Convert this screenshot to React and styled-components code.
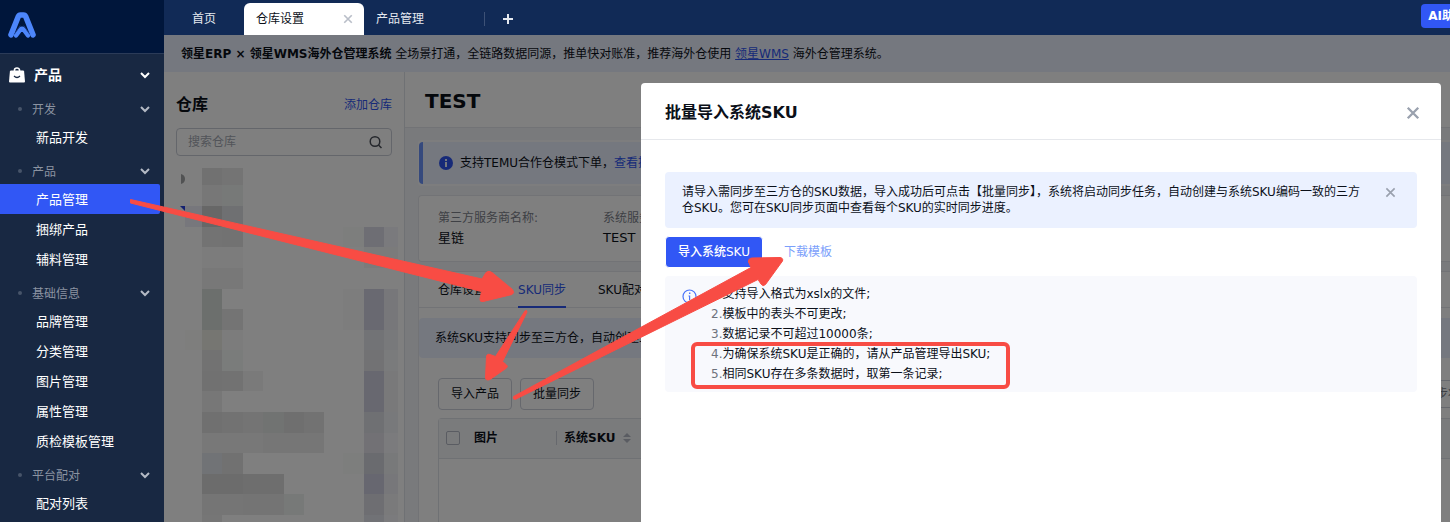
import styled, { createGlobalStyle } from "styled-components";

const GlobalStyle = createGlobalStyle`
    * {
        box-sizing: border-box;
    }
    body {
        margin: 0;
        font-family: "DejaVu Sans", "Noto Sans CJK SC", sans-serif;
        font-size: 12px;
        line-height: 20px;
        color: #0b1019;
    }
    button, input {
        font-family: inherit;
        font-size: 12px;
        line-height: 20px;
        color: inherit;
    }
    h1, h2, p, ul {
        margin: 0;
        padding: 0;
    }
    a {
        text-decoration: none;
    }
`

const Layout = styled.div`
    display: flex;
    position: relative;
    height: 100vh;
    overflow: hidden;
`

/* sidebar */
const Sidebar = styled.nav`
    flex: 0 0 164px;
    background: #182842;
    color: #fff;
`
const LogoBar = styled.div`
    height: 54px;
    padding: 12px 8px;
    background: #00163b;
    border-bottom: 1px solid #2b3b58;
`
const MenuTitle = styled.div`
    display: flex;
    align-items: center;
    height: 36px;
    padding: 6px 12px 0 9px;
    font-size: 14px;
    font-weight: 700;
`
const MenuTitleText = styled.span`
    flex: 1;
    padding-left: 9px;
`
const GroupTitle = styled.div`
    display: flex;
    align-items: center;
    height: 32px;
    padding: 6px 12px 0 18px;
    color: #8b93a1;
`
const Dot = styled.span`
    width: 4px;
    height: 4px;
    border-radius: 50%;
    background: #475469;
`
const GroupText = styled.span`
    flex: 1;
    padding: 2px 0 0 10px;
`
const MenuList = styled.ul`
    list-style: none;
`
const MenuItem = styled.a`
    display: block;
    height: 30px;
    margin-right: 4px;
    padding-left: 36px;
    border-radius: 0 2px 2px 0;
    font-size: 13px;
    line-height: 31px;
    color: #fff;
    background: ${(props) => (props.$active ? "#3157f5" : "transparent")};
`

/* top tabs */
const Main = styled.div`
    flex: 1;
    min-width: 0;
    display: flex;
    flex-direction: column;
`
const TopBar = styled.header`
    display: flex;
    align-items: flex-end;
    height: 35px;
    flex-shrink: 0;
    padding-left: 16px;
    background: #112a56;
    overflow: hidden;
`
const Tab = styled.div`
    display: flex;
    align-items: center;
    justify-content: space-between;
    width: ${(props) => props.$width};
    height: 32px;
    padding: 0 10px 0 12px;
    border-radius: 6px 6px 0 0;
    color: ${(props) => (props.$active ? "#0b1019" : "#e4e8ef")};
    background: ${(props) => (props.$active ? "#fff" : "transparent")};
`
const IconButton = styled.button`
    display: flex;
    align-items: center;
    justify-content: center;
    flex-shrink: 0;
    width: ${(props) => props.$size || "12px"};
    height: ${(props) => props.$size || "12px"};
    padding: 0;
    border: 0;
    background: none;
    color: ${(props) => props.$color || "#9aa1ae"};
`
const AddTab = styled.div`
    display: flex;
    align-items: center;
    height: 14px;
    margin-bottom: 9px;
    padding-left: 17px;
    border-left: 1px solid #3d5176;
`
const AiButton = styled.button`
    flex-shrink: 0;
    height: 24px;
    margin: 0 -23px 7px auto;
    padding: 0 7px;
    border: 0;
    border-radius: 4px;
    font-weight: 700;
    color: #fff;
    background: #3157f5;
`

/* page */
const Page = styled.div`
    position: relative;
    flex: 1;
    min-height: 0;
    display: flex;
    flex-direction: column;
    overflow: hidden;
`
const Notice = styled.div`
    height: 37px;
    flex-shrink: 0;
    padding-left: 17px;
    line-height: 39px;
    background: #ebf1ff;
`
const NoticeLink = styled.a`
    color: #2f55f0;
    text-decoration: underline;
`
const Columns = styled.div`
    flex: 1;
    display: flex;
    min-height: 0;
`
const Warehouses = styled.aside`
    flex: 0 0 241px;
    padding: 22px 12px 0;
    background: #fff;
    border-right: 1px solid #dfe2e8;
    overflow: hidden;
`
const WarehouseHead = styled.div`
    display: flex;
    align-items: center;
    justify-content: space-between;
    height: 22px;
`
const WarehouseTitle = styled.h2`
    font-size: 16px;
    font-weight: 700;
`
const TextLink = styled.a`
    color: ${(props) => props.$color || "#2f55f0"};
`
const SearchBox = styled.label`
    display: flex;
    align-items: center;
    height: 28px;
    margin: 12px 0;
    padding: 0 8px 0 11px;
    border: 1px solid #c9cdd6;
    border-radius: 4px;
`
const SearchInput = styled.input`
    flex: 1;
    min-width: 0;
    padding: 0;
    border: 0;
    outline: 0;
    background: none;
    &::placeholder {
        color: #a4a9b3;
        opacity: 1;
    }
`
const Mosaic = styled.svg`
    display: block;
    overflow: visible;
`
const Detail = styled.main`
    flex: 1;
    min-width: 0;
    display: flex;
    flex-direction: column;
    background: #f3f5f9;
`
const DetailTitle = styled.h1`
    height: 56px;
    padding-left: 20px;
    font-size: 20px;
    line-height: 58px;
    background: #fff;
    border-bottom: 1px solid #e4e7ec;
`
const DetailBody = styled.div`
    flex: 1;
    display: flex;
    flex-direction: column;
    gap: 9px;
    padding: 12px 0 0 13px;
`
const AlertFrame = styled.div`
    padding: 2px 0 2px 1px;
    border-radius: 4px 0 0 4px;
    background: #fafbfd;
`
const Alert = styled.div`
    display: flex;
    align-items: center;
    gap: 7px;
    height: 42px;
    padding-left: 16px;
    border-left: 4px solid #6b93fb;
    border-radius: 4px 0 0 4px;
    background: #ebf1ff;
`
const Card = styled.section`
    flex: ${(props) => (props.$grow ? 1 : "none")};
    border: 1px solid #e4e7ec;
    border-right: 0;
    border-radius: 4px 0 0 4px;
    background: #fff;
`
const Facts = styled.div`
    display: grid;
    grid-template-columns: 165px 1fr;
    height: 65px;
    padding: 12px 19px;
`
const FactLabel = styled.p`
    color: #7c818b;
`
const FactValue = styled.p`
    font-size: 13px;
`
const DetailTabs = styled.div`
    display: flex;
    gap: 32px;
    height: 36px;
    padding-left: 19px;
    line-height: 36px;
    border-bottom: 1px solid #e4e7ec;
`
const DetailTab = styled.a`
    height: 36px;
    color: ${(props) => (props.$active ? "#2f55f0" : "#0b1019")};
    border-bottom: 2px solid ${(props) => (props.$active ? "#2f55f0" : "transparent")};
`
const SyncHint = styled.p`
    height: 40px;
    margin-top: 10px;
    padding-left: 16px;
    line-height: 40px;
    background: #ebf1ff;
    border-radius: 4px 0 0 4px;
`
const Toolbar = styled.div`
    display: flex;
    align-items: center;
    gap: 8px;
    margin: 20px 0 8px;
    padding-left: 19px;
`
const ToolButton = styled.button`
    height: 32px;
    padding: 0 12px;
    border: 1px solid #ccd0da;
    border-radius: 4px;
    background: none;
`
const StatusButton = styled(ToolButton)`
    height: 28px;
    width: 100px;
    margin: 0 -61px 0 auto;
    text-align: left;
    color: #7c818b;
    flex-shrink: 0;
`
const TableFrame = styled.div`
    height: 200px;
    margin-left: 19px;
    border: 1px solid #dfe2e8;
    border-right: 0;
    border-radius: 4px 0 0 0;
`
const Table = styled.table`
    width: 100%;
    table-layout: fixed;
    border-collapse: collapse;
`
const Th = styled.th`
    width: ${(props) => props.$width || "auto"};
    height: 39px;
    padding: 0 0 0 7px;
    text-align: left;
    background: #f5f6f9;
    border-bottom: 1px solid #dfe2e8;
`
const ThInner = styled.div`
    display: flex;
    align-items: center;
    gap: 8px;
    height: 14px;
    padding-left: 7px;
    border-left: 1px solid #ccd0da;
`
const Checkbox = styled.input`
    appearance: none;
    display: block;
    width: 14px;
    height: 14px;
    margin: 0;
    border: 1px solid #b4b9c4;
    border-radius: 2px;
`

/* import dialog */
const Mask = styled.div`
    position: absolute;
    inset: 0;
    display: flex;
    justify-content: flex-end;
    padding: 48px 9px 0 20px;
    background: rgba(0, 0, 0, 0.5);
`
const Dialog = styled.section`
    width: 800px;
    border-radius: 4px 4px 0 0;
    background: #fff;
`
const DialogHead = styled.div`
    display: flex;
    align-items: center;
    justify-content: space-between;
    height: 57px;
    padding: 3px 20px 0 24px;
    border-bottom: 1px solid #e6e8ec;
`
const DialogTitle = styled.h2`
    font-size: 16px;
    font-weight: 700;
`
const DialogBody = styled.div`
    display: flex;
    flex-direction: column;
    gap: 8px;
    padding: 32px 24px;
`
const Tip = styled.div`
    display: flex;
    gap: 16px;
    padding: 12px 21px 12px 17px;
    line-height: 16px;
    border-radius: 4px;
    background: #ebf1ff;
`
const TipText = styled.p`
    flex: 1;
`
const TipClose = styled(IconButton)`
    height: 16px;
`
const Actions = styled.div`
    display: flex;
    align-items: center;
    gap: 21px;
`
const PrimaryButton = styled.button`
    height: 32px;
    padding: 0 12px;
    border: 1px solid #fff;
    border-radius: 4px;
    font-weight: 500;
    color: #fff;
    background: #3157f5;
`
const Notes = styled.div`
    display: flex;
    align-items: flex-start;
    gap: 14px;
    padding: 8px 17px;
    border-radius: 4px;
    background: #f8f9fd;
`
const NoteIcon = styled.span`
    display: flex;
    align-items: center;
    height: 24px;
`
const NoteList = styled.ul`
    list-style: none;
`
const NoteNumber = styled.span`
    color: #6d727c;
`

/* marks drawn over the page */
const Marks = styled.svg`
    position: absolute;
    top: 0;
    left: 0;
    pointer-events: none;
`

const Chevron = ({ color }) => (
    <svg width="14" height="14" viewBox="0 0 14 14" fill="none" stroke={color} strokeWidth="2">
        <path d="M3 5l4 4 4-4" />
    </svg>
)

const Cross = ({ size = 12, width = 2 }) => (
    <svg width={size} height={size} viewBox="0 0 12 12" fill="none" stroke="currentColor" strokeWidth={width}>
        <path d="M1.5 1.5l9 9M10.5 1.5l-9 9" />
    </svg>
)

const Logo = () => (
    <svg width="28" height="26" viewBox="0 0 28 26" fill="none" strokeLinecap="round" strokeLinejoin="round">
        <path d="M3 22.8L10.4 4.3q.6-1.3 2-1.3h3.2q1.4 0 2 1.3L25 22.8" stroke="#4c86fb" strokeWidth="5.6" />
        <path d="M8 23.5l4.5-6q1.5-1.6 3 0l4.5 6" stroke="#4c86fb" strokeWidth="4.4" />
        <path d="M6.5 22l5.5-8M21.5 22l-5.5-8" stroke="#1d429c" strokeWidth="0.8" />
    </svg>
)

const Bag = () => (
    <svg width="16" height="16" viewBox="0 0 16 16">
        <path d="M5.5 5V3a2.5 2 0 0 1 5 0v2" fill="none" stroke="#fff" strokeWidth="1.6" />
        <path d="M2 3.5h12q1 0 1.1 1L16 14.5q0 1-1 1H1q-1 0-1-1L.9 4.5q.1-1 1.100-1z" fill="#fff" />
        <path d="M5 9q3 3 6 0" fill="none" stroke="#182842" strokeWidth="1.2" />
    </svg>
)

const InfoFilled = () => (
    <svg width="14" height="14" viewBox="0 0 14 14">
        <circle cx="7" cy="7" r="7" fill="#2f55f0" />
        <path d="M6 3h2v2H6zM6 6h2v5H6z" fill="#ebf1ff" />
    </svg>
)

const InfoOutline = () => (
    <svg width="15" height="15" viewBox="0 0 15 15">
        <circle cx="7.5" cy="7.5" r="6.5" fill="none" stroke="#4a74f8" strokeWidth="1.2" />
        <path d="M7 3.5h1.4v1.5H7zM6.5 6.5h1.7V11H7V7.5h-.5z" fill="#4a74f8" />
    </svg>
)

const groups = [
    { title: "开发", items: ["新品开发"] },
    { title: "产品", items: ["产品管理", "捆绑产品", "辅料管理"] },
    { title: "基础信息", items: ["品牌管理", "分类管理", "图片管理", "属性管理", "质检模板管理"] },
    { title: "平台配对", items: ["配对列表"] },
]

const notes = [
    "支持导入格式为xslx的文件;",
    "模板中的表头不可更改;",
    "数据记录不可超过10000条;",
    "为确保系统SKU是正确的，请从产品管理导出SKU;",
    "相同SKU存在多条数据时，取第一条记录;",
]

// x, y, width, height, fill
const blocks = [
    [26, 0, 20, 17, "#e2e2e2"], [46, 0, 21, 17, "#e8e8e8"],
    [26, 17, 20, 21, "#efefef"], [46, 17, 21, 21, "#eef2f0"],
    [9, 38, 17, 21, "#eeeef8"], [26, 38, 20, 21, "#cecece"], [46, 38, 21, 21, "#dfe1e5"],
    [26, 59, 20, 20, "#e6e6e6"], [46, 59, 21, 20, "#e4e4e4"],
    [26, 79, 41, 21, "#f8f8f8"], [26, 100, 41, 21, "#f1f1f1"],
    [26, 121, 20, 41, "#d9dedb"], [46, 141, 21, 21, "#e9e9e9"],
    [9, 162, 17, 20, "#fdfdfa"], [26, 162, 20, 20, "#edece5"], [46, 162, 21, 20, "#f9f9f9"],
    [26, 182, 20, 21, "#e4e4e4"], [46, 182, 21, 21, "#f4f8f6"],
    [26, 203, 20, 20, "#e2e2e2"], [46, 203, 21, 20, "#e5e5e5"], [67, 203, 20, 20, "#f5f5f5"],
    [26, 223, 20, 21, "#eeeeee"],
    [26, 244, 20, 21, "#e0e0e0"], [46, 244, 21, 21, "#e4e4e4"], [67, 244, 20, 21, "#e9e9e9"],
    [87, 244, 21, 21, "#e3e7e4"], [108, 244, 20, 21, "#dedede"], [128, 244, 20, 21, "#e5e5e5"],
    [26, 265, 61, 20, "#f0f0f0"], [87, 265, 61, 20, "#ececec"],
    [26, 285, 20, 21, "#e3e6ed"], [46, 285, 21, 21, "#e3e3e3"],
    [26, 306, 41, 20, "#d8d8d8"], [67, 306, 41, 20, "#dddddd"],
    [26, 326, 41, 21, "#ebebeb"], [67, 326, 41, 21, "#e8e8e8"], [108, 326, 20, 21, "#eff3f1"],
    [26, 347, 20, 20, "#ececec"],
    [167, 59, 21, 20, "#fafcfb"], [188, 59, 20, 20, "#dddde8"], [208, 59, 14, 20, "#f4f4fa"],
    [188, 79, 34, 21, "#f6f6f6"],
    [167, 121, 21, 41, "#fbfbfb"], [188, 121, 20, 41, "#d3d3e2"], [208, 121, 14, 41, "#eeeff5"],
    [188, 162, 20, 20, "#e4e6ed"], [208, 162, 14, 20, "#f1f3f7"],
    [188, 182, 20, 21, "#e4e4e8"], [208, 182, 14, 21, "#f4f6f8"],
    [188, 203, 20, 41, "#d0d0e1"], [208, 203, 14, 41, "#f2f2f5"],
    [188, 244, 20, 21, "#dfe0e7"], [208, 244, 14, 21, "#f1f3f6"],
    [188, 265, 20, 20, "#e5e2ea"], [208, 265, 14, 20, "#f6f6fa"],
    [167, 285, 21, 21, "#fafcfb"], [188, 285, 20, 21, "#d5d6de"], [208, 285, 14, 21, "#f1f3f5"],
    [188, 306, 20, 20, "#cecee0"], [208, 306, 14, 20, "#efeff5"],
    [188, 326, 20, 21, "#dcdde5"], [208, 326, 14, 21, "#f4f5f7"],
    [188, 347, 20, 20, "#e3e4ec"], [208, 347, 14, 20, "#f6f6fa"],
]

const App = () => {
    return (
        <Layout>
            <GlobalStyle />
            <Sidebar>
                <LogoBar>
                    <Logo />
                </LogoBar>
                <MenuTitle>
                    <Bag />
                    <MenuTitleText>产品</MenuTitleText>
                    <Chevron color="#fff" />
                </MenuTitle>
                {groups.map((group) => (
                    <div key={group.title}>
                        <GroupTitle>
                            <Dot />
                            <GroupText>{group.title}</GroupText>
                            <Chevron color="#b4bac5" />
                        </GroupTitle>
                        <MenuList>
                            {group.items.map((item) => (
                                <li key={item}>
                                    <MenuItem href="#" $active={item === "产品管理"}>{item}</MenuItem>
                                </li>
                            ))}
                        </MenuList>
                    </div>
                ))}
            </Sidebar>
            <Main>
                <TopBar>
                    <Tab $width="64px">首页</Tab>
                    <Tab $width="120px" $active>
                        仓库设置
                        <IconButton aria-label="关闭标签" $color="#b9bec8">
                            <Cross size={10} />
                        </IconButton>
                    </Tab>
                    <Tab $width="120px">产品管理</Tab>
                    <AddTab>
                        <IconButton aria-label="新建标签" $color="#e4e8ef">
                            <svg width="10" height="10" viewBox="0 0 10 10" stroke="currentColor" strokeWidth="2">
                                <path d="M5 0v10M0 5h10" />
                            </svg>
                        </IconButton>
                    </AddTab>
                    <AiButton>AI助手</AiButton>
                </TopBar>
                <Page>
                    <Notice>
                        <b>领星ERP × 领星WMS海外仓管理系统</b> 全场景打通，全链路数据同源，推单快对账准，推荐海外仓使用 <NoticeLink href="#">领星WMS</NoticeLink> 海外仓管理系统。
                    </Notice>
                    <Columns>
                        <Warehouses>
                            <WarehouseHead>
                                <WarehouseTitle>仓库</WarehouseTitle>
                                <TextLink href="#">添加仓库</TextLink>
                            </WarehouseHead>
                            <SearchBox>
                                <SearchInput placeholder="搜索仓库" aria-label="搜索仓库" />
                                <svg width="14" height="14" viewBox="0 0 14 14" fill="none" stroke="#4a4f59" strokeWidth="1.5">
                                    <circle cx="6" cy="6.5" r="4.8" />
                                    <path d="M9.5 10l3 3" />
                                </svg>
                            </SearchBox>
                            <Mosaic width="216" height="367">
                                <path d="M5 6q4 1 4 5t-4 5z" fill="#a2a4a6" />
                                <path d="M4 38h5v5z" fill="#2842e0" />
                                {blocks.map(([x, y, w, h, fill]) => (
                                    <rect key={x + "-" + y} x={x} y={y} width={w} height={h} fill={fill} />
                                ))}
                            </Mosaic>
                        </Warehouses>
                        <Detail>
                            <DetailTitle>TEST</DetailTitle>
                            <DetailBody>
                                <AlertFrame>
                                    <Alert>
                                        <InfoFilled />
                                        <span>支持TEMU合作仓模式下单，<TextLink href="#">查看操作指引</TextLink></span>
                                    </Alert>
                                </AlertFrame>
                                <Card>
                                    <Facts>
                                        <div>
                                            <FactLabel>第三方服务商名称:</FactLabel>
                                            <FactValue>星链</FactValue>
                                        </div>
                                        <div>
                                            <FactLabel>系统服务商名称:</FactLabel>
                                            <FactValue>TEST</FactValue>
                                        </div>
                                    </Facts>
                                </Card>
                                <Card $grow>
                                    <DetailTabs>
                                        <DetailTab href="#">仓库设置</DetailTab>
                                        <DetailTab href="#" $active>SKU同步</DetailTab>
                                        <DetailTab href="#">SKU配对</DetailTab>
                                    </DetailTabs>
                                    <SyncHint>系统SKU支持同步至三方仓，自动创建三方仓SKU</SyncHint>
                                    <Toolbar>
                                        <ToolButton>导入产品</ToolButton>
                                        <ToolButton>批量同步</ToolButton>
                                        <StatusButton>同步状态</StatusButton>
                                    </Toolbar>
                                    <TableFrame>
                                        <Table>
                                            <thead>
                                                <tr>
                                                    <Th $width="28px"><Checkbox type="checkbox" aria-label="全选" /></Th>
                                                    <Th $width="82px">图片</Th>
                                                    <Th>
                                                        <ThInner>
                                                            系统SKU
                                                            <svg width="8" height="10" viewBox="0 0 8 10" fill="#b4b9c4">
                                                                <path d="M0 4l4-4 4 4zM0 6l4 4 4-4z" />
                                                            </svg>
                                                        </ThInner>
                                                    </Th>
                                                </tr>
                                            </thead>
                                        </Table>
                                    </TableFrame>
                                </Card>
                            </DetailBody>
                        </Detail>
                    </Columns>
                    <Mask>
                        <Dialog role="dialog" aria-label="批量导入系统SKU">
                            <DialogHead>
                                <DialogTitle>批量导入系统SKU</DialogTitle>
                                <IconButton aria-label="关闭" $size="16px">
                                    <Cross size={14} />
                                </IconButton>
                            </DialogHead>
                            <DialogBody>
                                <Tip>
                                    <TipText>请导入需同步至三方仓的SKU数据，导入成功后可点击【批量同步】，系统将启动同步任务，自动创建与系统SKU编码一致的三方仓SKU。您可在SKU同步页面中查看每个SKU的实时同步进度。</TipText>
                                    <TipClose aria-label="关闭提示">
                                        <Cross size={11} width={1.8} />
                                    </TipClose>
                                </Tip>
                                <Actions>
                                    <PrimaryButton>导入系统SKU</PrimaryButton>
                                    <TextLink href="#" $color="#7ba0fb">下载模板</TextLink>
                                </Actions>
                                <Notes>
                                    <NoteIcon>
                                        <InfoOutline />
                                    </NoteIcon>
                                    <NoteList>
                                        {notes.map((note, i) => (
                                            <li key={note}>
                                                <NoteNumber>{i + 1}.</NoteNumber>{note}
                                            </li>
                                        ))}
                                    </NoteList>
                                </Notes>
                            </DialogBody>
                        </Dialog>
                    </Mask>
                </Page>
            </Main>
            <Marks width="1100" height="500" fill="#f84c44" stroke="#f84c44" strokeLinejoin="round">
                <path d="M130.5 199.5L482 279L486 272.5Q489 270 492 272.5L512.5 289.5Q515 293 512 294.5L483 301.5Q479.5 302 480 299L481.5 291.5L130.5 203Z" />
                <path d="M525 311L495.5 356.5L490 354.5Q486.5 353.5 486.5 357L485.5 378Q486 381 490 379.5L506.5 368Q508.5 366 506 364.5L502.5 361.5L527 312Q527 309.5 525 311Z" />
                <path d="M513.5 396.5L751 267.5L748.5 262Q748 258.5 752 258L780 257.5Q783.5 258 782.5 261L765.5 284.5Q763 287 761 284L758 279.5L515 399.5Q512.5 399 513.5 396.5Z" />
                <rect x="693" y="344" width="315" height="43" rx="4" fill="none" strokeWidth="4" />
            </Marks>
        </Layout>
    )
}

export default App;
